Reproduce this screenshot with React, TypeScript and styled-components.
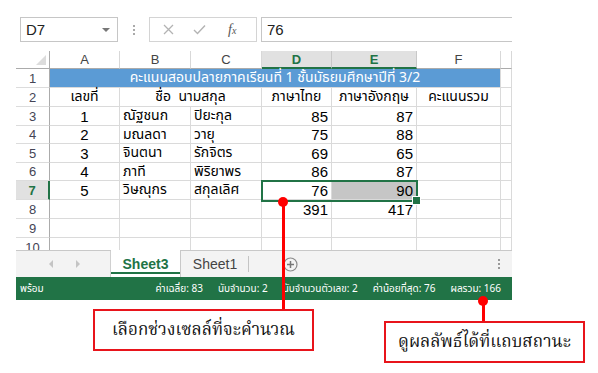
import React from 'react';
import styled, { createGlobalStyle, css } from 'styled-components';

const GREEN = '#217346';
const THAI = `Tahoma, "Leelawadee UI", "Noto Sans Thai", "Noto Sans Thai UI", Loma, Garuda, "Noto Sans", sans-serif`;
const THAI_SERIF = `"Angsana New", "TH Sarabun New", "Noto Serif Thai", Kinnari, Norasi, Laksaman, "Liberation Serif", serif`;

const Global = createGlobalStyle`
  html, body { margin: 0; padding: 0; background: #fff; }
  body { width: 598px; height: 373px; overflow: hidden; }
  * { box-sizing: border-box; }
`;

const Page = styled.div`
  position: relative;
  width: 598px;
  height: 373px;
  background: #fff;
  font-family: ${THAI};
`;

const Excel = styled.div`
  width: 496px;
  margin-left: 16px;
  padding-top: 17px;
  display: flex;
  flex-direction: column;
`;

/* ---------- formula bar ---------- */
const FormulaBar = styled.div`
  display: flex;
  align-items: stretch;
  height: 25px;
`;

const NameBox = styled.div`
  margin-left: 4px;
  width: 98px;
  border: 1px solid #c6c6c6;
  display: flex;
  align-items: center;
  justify-content: space-between;
  padding: 0 7px 0 5px;
  font: 15px "Liberation Sans", Arial, sans-serif;
  color: #222;
`;

const DropArrow = styled.span`
  width: 0;
  height: 0;
  border-left: 4px solid transparent;
  border-right: 4px solid transparent;
  border-top: 4px solid #777;
`;

const Grip = styled.div`
  width: 31px;
  display: flex;
  flex-direction: column;
  align-items: center;
  justify-content: center;
  gap: 2px;
  & > i {
    display: block;
    width: 2px;
    height: 2px;
    background: #aaa;
  }
`;

const FxBox = styled.div`
  width: 108px;
  border: 1px solid #d4d4d4;
  display: flex;
  align-items: center;
  padding: 0 0 0 13px;
  gap: 19px;
`;

const Fx = styled.span`
  font: italic 14px "Liberation Serif", "Times New Roman", serif;
  color: #555;
  margin-left: 3px;
  & > small {
    font-size: 10px;
  }
`;

const ValueBox = styled.div`
  margin-left: 4px;
  flex: 1;
  border-top: 1px solid #c6c6c6;
  border-bottom: 1px solid #c6c6c6;
  border-left: 1px solid #c6c6c6;
  display: flex;
  align-items: center;
  padding-left: 5px;
  font: 15px "Liberation Sans", Arial, sans-serif;
  color: #222;
`;

/* ---------- sheet ---------- */
const Sheet = styled.div`
  position: relative;
  margin-top: 9px;
  height: 199px;
  overflow: hidden;
  display: grid;
  grid-template-columns: 34px 70px 71px 71px 70px 85px 84px 11px;
  grid-template-rows: 18px 19px 19px 19px 18px 19px 18px 19px 19px 19px 19px;
  background: #fff;
`;

const Corner = styled.div`
  position: relative;
  border-right: 1px solid #ababab;
  border-bottom: 1px solid #ababab;
  &::after {
    content: '';
    position: absolute;
    right: 3px;
    bottom: 3px;
    width: 0;
    height: 0;
    border-left: 10px solid transparent;
    border-bottom: 10px solid #dcdcdc;
  }
`;

const ColHead = styled.div<{ $sel?: boolean }>`
  display: flex;
  align-items: center;
  justify-content: center;
  font: 13px "Liberation Sans", Arial, sans-serif;
  color: #444;
  background: #fff;
  border-right: 1px solid #d8d8d8;
  border-bottom: 1px solid #ababab;
  ${(p) =>
    p.$sel &&
    css`
      background: #e1e1e1;
      color: ${GREEN};
      font-weight: bold;
      border-right-color: #c8c8c8;
      border-bottom: 2px solid ${GREEN};
    `}
`;

const RowHead = styled.div<{ $sel?: boolean }>`
  display: flex;
  align-items: center;
  justify-content: center;
  font: 13px "Liberation Sans", Arial, sans-serif;
  color: #445;
  background: #fff;
  border-right: 1px solid #ababab;
  border-bottom: 1px solid #dcdcdc;
  ${(p) =>
    p.$sel &&
    css`
      background: #e1e1e1;
      color: ${GREEN};
      font-weight: bold;
      border-right: 2px solid ${GREEN};
    `}
`;

type Align = 'left' | 'center' | 'right';

const Cell = styled.div<{ $align?: Align; $span?: number; $num?: boolean; $fill?: string; $color?: string }>`
  display: flex;
  align-items: center;
  justify-content: ${(p) => (p.$align === 'right' ? 'flex-end' : p.$align === 'center' ? 'center' : 'flex-start')};
  padding: 0 3px;
  white-space: nowrap;
  overflow: visible;
  grid-column: span ${(p) => p.$span ?? 1};
  border-right: 1px solid #dadada;
  border-bottom: 1px solid #dadada;
  background: ${(p) => p.$fill ?? '#fff'};
  color: ${(p) => p.$color ?? '#000'};
  font-family: ${(p) => (p.$num ? '"Liberation Sans", Arial, sans-serif' : THAI)};
  font-size: ${(p) => (p.$num ? '15px' : '14px')};
  line-height: 1;
`;

const Selection = styled.div`
  position: absolute;
  left: 245px;
  top: 129px;
  width: 157px;
  height: 22px;
  border: 2px solid ${GREEN};
  pointer-events: none;
  &::after {
    content: '';
    position: absolute;
    right: -5px;
    bottom: -5px;
    width: 7px;
    height: 7px;
    background: ${GREEN};
    border: 1px solid #fff;
  }
`;

/* ---------- tab bar ---------- */
const TabBar = styled.div`
  display: flex;
  align-items: stretch;
  height: 27px;
  background: #f3f3f3;
  border-top: 1px solid #c8c8c8;
`;

const TabNav = styled.div`
  width: 95px;
  display: flex;
  align-items: center;
  padding-left: 33px;
  gap: 23px;
  border-right: 1px solid #d0d0d0;
`;

const NavArrow = styled.span<{ $dir: 'l' | 'r' }>`
  width: 0;
  height: 0;
  border-top: 4px solid transparent;
  border-bottom: 4px solid transparent;
  ${(p) => (p.$dir === 'l' ? 'border-right: 4px solid #c4c4c4;' : 'border-left: 4px solid #c4c4c4;')}
`;

const Tab = styled.div<{ $active?: boolean }>`
  display: flex;
  align-items: center;
  justify-content: center;
  font: 14px "Liberation Sans", Arial, sans-serif;
  color: #444;
  ${(p) =>
    p.$active
      ? css`
          width: 70px;
          margin-top: -1px;
          background: #fff;
          color: ${GREEN};
          font-weight: bold;
          border-right: 1px solid #c8c8c8;
          box-shadow: inset 0 -3px 0 #fff, inset 0 -5px 0 ${GREEN};
        `
      : css`
          width: 68px;
          position: relative;
          &::after {
            content: '';
            position: absolute;
            right: 0;
            top: 5px;
            bottom: 5px;
            width: 1px;
            background: #c4c4c4;
          }
        `}
`;

const AddSheet = styled.div`
  margin-left: 34px;
  display: flex;
  align-items: center;
`;

const TabRest = styled.div`
  flex: 1;
  display: flex;
  align-items: center;
  justify-content: flex-end;
  padding-right: 12px;
`;

const VDots = styled.div`
  display: flex;
  flex-direction: column;
  gap: 2px;
  & > i {
    display: block;
    width: 2px;
    height: 2px;
    background: #999;
  }
`;

/* ---------- status bar ---------- */
const StatusBar = styled.div`
  height: 23px;
  background: ${GREEN};
  color: #fff;
  display: flex;
  align-items: center;
  padding: 0 11px 0 4px;
  font-family: ${THAI};
  font-size: 10px;
  white-space: nowrap;
`;

const StatusGroup = styled.div`
  margin-left: auto;
  display: flex;
  gap: 15px;
`;

/* ---------- annotations ---------- */
const Callout = styled.div<{ $x: number; $y: number; $w: number }>`
  position: absolute;
  left: ${(p) => p.$x}px;
  top: ${(p) => p.$y}px;
  width: ${(p) => p.$w}px;
  height: 42px;
  border: 2px solid #e8141b;
  background: #fff;
  display: flex;
  align-items: center;
  justify-content: center;
  white-space: nowrap;
  font-family: ${THAI_SERIF};
  font-size: 17px;
  line-height: 1;
  color: #111;
`;

const Leader = styled.div<{ $x: number; $y: number; $len: number }>`
  position: absolute;
  left: ${(p) => p.$x - 1.5}px;
  top: ${(p) => p.$y}px;
  width: 3px;
  height: ${(p) => p.$len}px;
  background: #f00;
  &::before {
    content: '';
    position: absolute;
    left: -3.5px;
    top: -5px;
    width: 10px;
    height: 10px;
    border-radius: 50%;
    background: #f00;
  }
`;

type Row = { n: number; cells: React.ReactNode };

const data: [string, string, string, string, string][] = [
  ['1', 'ณัฐชนก', 'ปิยะกุล', '85', '87'],
  ['2', 'มณลดา', 'วายุ', '75', '88'],
  ['3', 'จินตนา', 'รักจิตร', '69', '65'],
  ['4', 'ภาที', 'พิริยาพร', '86', '87'],
  ['5', 'วิษณุกร', 'สกุลเลิศ', '76', '90'],
];

const Cross = () => (
  <svg width="11" height="11" viewBox="0 0 11 11">
    <path d="M1 1 L10 10 M10 1 L1 10" stroke="#b3b3b3" strokeWidth="1.3" fill="none" />
  </svg>
);

const Check = () => (
  <svg width="13" height="11" viewBox="0 0 13 11">
    <path d="M1 6 L4.5 9.5 L12 1.5" stroke="#b3b3b3" strokeWidth="1.4" fill="none" />
  </svg>
);

const Plus = () => (
  <svg width="15" height="15" viewBox="0 0 15 15">
    <circle cx="7.5" cy="7.5" r="6.5" stroke="#8a8a8a" strokeWidth="1.2" fill="none" />
    <path d="M7.5 4 V11 M4 7.5 H11" stroke="#777" strokeWidth="1.5" />
  </svg>
);

export default function App() {
  const cols = ['A', 'B', 'C', 'D', 'E', 'F'];
  const rows: Row[] = [];

  rows.push({
    n: 1,
    cells: (
      <>
        <Cell $span={6} $align="center" $fill="#5b9bd5" $color="#fff">
          คะแนนสอบปลายภาคเรียนที่ 1 ชั้นมัธยมศึกษาปีที่ 3/2
        </Cell>
        <Cell />
      </>
    ),
  });
  rows.push({
    n: 2,
    cells: (
      <>
        <Cell $align="center">เลขที่</Cell>
        <Cell $span={2} $align="center">ชื่อ&nbsp;&nbsp;นามสกุล</Cell>
        <Cell $align="center">ภาษาไทย</Cell>
        <Cell $align="center">ภาษาอังกฤษ</Cell>
        <Cell $align="center">คะแนนรวม</Cell>
        <Cell />
      </>
    ),
  });
  data.forEach((d, i) => {
    rows.push({
      n: i + 3,
      cells: (
        <>
          <Cell $num $align="center">{d[0]}</Cell>
          <Cell>{d[1]}</Cell>
          <Cell>{d[2]}</Cell>
          <Cell $num $align="right">{d[3]}</Cell>
          <Cell $num $align="right" $fill={i === 4 ? '#c6c6c6' : undefined}>{d[4]}</Cell>
          <Cell />
          <Cell />
        </>
      ),
    });
  });
  rows.push({
    n: 8,
    cells: (
      <>
        <Cell />
        <Cell />
        <Cell />
        <Cell $num $align="right">391</Cell>
        <Cell $num $align="right">417</Cell>
        <Cell />
        <Cell />
      </>
    ),
  });
  [9, 10].forEach((n) =>
    rows.push({
      n,
      cells: (
        <>
          {Array.from({ length: 7 }).map((_, k) => (
            <Cell key={k} />
          ))}
        </>
      ),
    })
  );

  return (
    <Page>
      <Global />
      <Excel>
        <FormulaBar>
          <NameBox>
            D7
            <DropArrow />
          </NameBox>
          <Grip>
            <i />
            <i />
            <i />
          </Grip>
          <FxBox>
            <Cross />
            <Check />
            <Fx>
              f<small>x</small>
            </Fx>
          </FxBox>
          <ValueBox>76</ValueBox>
        </FormulaBar>

        <Sheet>
          <Corner />
          {cols.map((c) => (
            <ColHead key={c} $sel={c === 'D' || c === 'E'}>
              {c}
            </ColHead>
          ))}
          <ColHead />
          {rows.map((r) => (
            <React.Fragment key={r.n}>
              <RowHead $sel={r.n === 7}>{r.n}</RowHead>
              {r.cells}
            </React.Fragment>
          ))}
          <Selection />
        </Sheet>

        <TabBar>
          <TabNav>
            <NavArrow $dir="l" />
            <NavArrow $dir="r" />
          </TabNav>
          <Tab $active>Sheet3</Tab>
          <Tab>Sheet1</Tab>
          <AddSheet>
            <Plus />
          </AddSheet>
          <TabRest>
            <VDots>
              <i />
              <i />
              <i />
            </VDots>
          </TabRest>
        </TabBar>

        <StatusBar>
          <span>พร้อม</span>
          <StatusGroup>
            <span>ค่าเฉลี่ย: 83</span>
            <span>นับจำนวน: 2</span>
            <span>นับจำนวนตัวเลข: 2</span>
            <span>ค่าน้อยที่สุด: 76</span>
            <span>ผลรวม: 166</span>
          </StatusGroup>
        </StatusBar>
      </Excel>

      <Leader $x={283} $y={202} $len={108} />
      <Leader $x={483} $y={301} $len={21} />
      <Callout $x={93} $y={309} $w={221}>
        เลือกช่วงเซลล์ที่จะคำนวณ
      </Callout>
      <Callout $x={384} $y={321} $w={201}>
        ดูผลลัพธ์ได้ที่แถบสถานะ
      </Callout>
    </Page>
  );
}
